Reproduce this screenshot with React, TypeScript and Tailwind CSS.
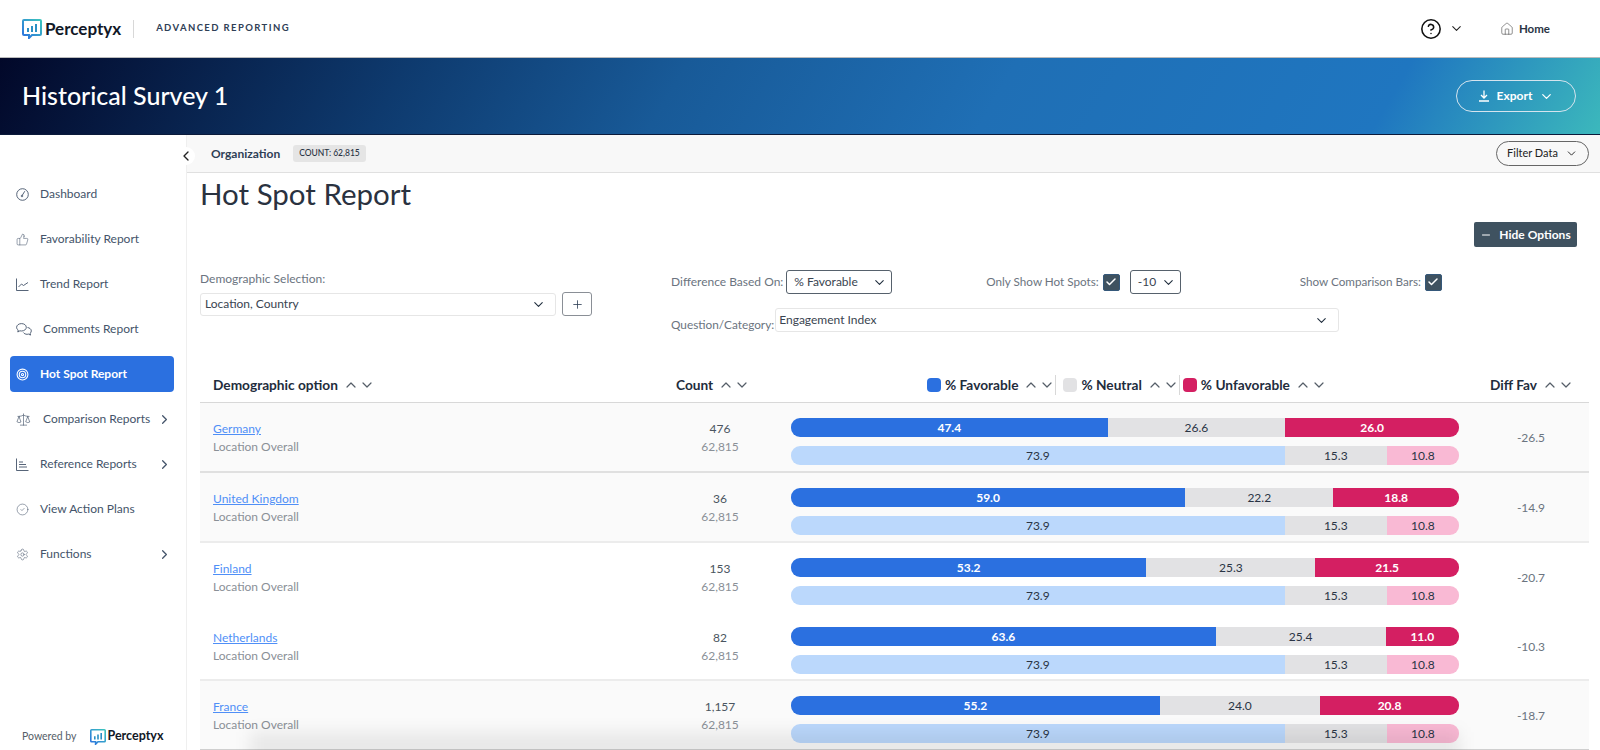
import { Check, ChevronDown, ChevronLeft, ChevronRight, ChevronUp, CircleCheck, CircleHelp, House, Minus, Plus, Scale, Settings, Target, ThumbsUp } from "lucide-react";

const navItems = [
  { label: "Dashboard", icon: "dash" },
  { label: "Favorability Report", icon: "thumb" },
  { label: "Trend Report", icon: "trend" },
  { label: "Comments Report", icon: "comments", wide: true },
  { label: "Hot Spot Report", icon: "target", active: true },
  { label: "Comparison Reports", icon: "scale", wide: true, more: true },
  { label: "Reference Reports", icon: "ref", more: true },
  { label: "View Action Plans", icon: "check" },
  { label: "Functions", icon: "gear", more: true },
];

const rows = [
  { name: "Germany", count: "476", bar: [47.4, 26.6, 26.0], diff: "-26.5", cls: "h-[70px] bg-[#fafafa] border-b-2 border-[#e0e0e0]" },
  { name: "United Kingdom", count: "36", bar: [59.0, 22.2, 18.8], diff: "-14.9", cls: "h-[70px] bg-[#fafafa] border-b-2 border-[#ececec]" },
  { name: "Finland", count: "153", bar: [53.2, 25.3, 21.5], diff: "-20.7", cls: "h-[69px] bg-white" },
  { name: "Netherlands", count: "82", bar: [63.6, 25.4, 11.0], diff: "-10.3", cls: "h-[69px] bg-white border-b-2 border-[#ececec]" },
  { name: "France", count: "1,157", bar: [55.2, 24.0, 20.8], diff: "-18.7", cls: "h-[69px] bg-[#fafafa] border-b border-[#cfcfcf]" },
];

function Logo({ size = 20 }: { size?: number }) {
  return (
    <svg width={size} height={size} viewBox="0 0 20 20" fill="none">
      <defs>
        <linearGradient id="lg" x1="0" y1="1" x2="1" y2="0">
          <stop offset="0" stopColor="#2b70e0" />
          <stop offset="1" stopColor="#3cc4bd" />
        </linearGradient>
      </defs>
      <path d="M2 1h16a1 1 0 0 1 1 1v13a1 1 0 0 1-1 1H10l-3 3v-3H2a1 1 0 0 1-1-1V2a1 1 0 0 1 1-1z" stroke="url(#lg)" strokeWidth="2" />
      <path d="M6 9v4M10 7v6M14 5v8" stroke="#2a8fc4" strokeWidth="2" />
    </svg>
  );
}

function NavIcon({ name }: { name: string }) {
  const cls = "h-[13px] w-[13px] shrink-0";
  if (name === "thumb") return <ThumbsUp className={cls} strokeWidth={1} />;
  if (name === "target") return <Target className={cls} strokeWidth={2} />;
  if (name === "scale") return <Scale className="h-[15px] w-[15px] shrink-0" strokeWidth={1} />;
  if (name === "check") return <CircleCheck className={cls} strokeWidth={1} />;
  if (name === "gear") return <Settings className={cls} strokeWidth={1} />;
  if (name === "dash")
    return (
      <svg className={cls} viewBox="0 0 13 13" fill="none" stroke="currentColor" strokeWidth="0.9">
        <circle cx="6.5" cy="6.5" r="5.8" />
        <path d="M8.8 3.2 6.2 7.4" />
        <circle cx="6" cy="8" r="0.8" />
      </svg>
    );
  if (name === "trend")
    return (
      <svg className={cls} viewBox="0 0 13 13" fill="none" stroke="currentColor" strokeWidth="0.9">
        <path d="M.5 .5v12h12" />
        <path d="M2.5 9 5.5 6 7.5 7.5 12 4.5" />
      </svg>
    );
  if (name === "ref")
    return (
      <svg className={cls} viewBox="0 0 13 13" fill="none" stroke="currentColor" strokeWidth="0.9">
        <path d="M.5 .5v12h12" />
        <path d="M3 4h4M3 6.5h7M3 9h8" />
      </svg>
    );
  return (
    <svg className="h-[13px] w-[16px] shrink-0" viewBox="0 0 16 13" fill="none" stroke="currentColor" strokeWidth="0.9">
      <path d="M5.5 .6c2.700 0 4.800 1.600 4.800 3.700S8.200 8 5.500 8c-.6 0-1.100-.1-1.600-.2L1.800 9l.4-2C1.100 6.300.6 5.400.6 4.300.6 2.200 2.800.6 5.500.6z" />
      <path d="M11.500 4.500c2 .3 3.800 1.600 3.800 3.400 0 .9-.4 1.700-1.100 2.300l.3 1.900-2-1c-.5.1-.9.200-1.400.200-1.600 0-3-.7-3.700-1.800" />
    </svg>
  );
}

function Sort() {
  return (
    <span className="ml-[5px] flex items-center text-[#555e68]">
      <ChevronUp className="h-[16px] w-[16px]" strokeWidth={1.8} />
      <ChevronDown className="h-[16px] w-[16px]" strokeWidth={1.8} />
    </span>
  );
}

function Checkbox() {
  return (
    <span className="flex h-[17px] w-[17px] items-center justify-center rounded-[2px] border border-[#35587a] bg-[#3f5260]">
      <Check className="h-[12px] w-[12px] text-white" strokeWidth={3} />
    </span>
  );
}

function Bar({ values, kind }: { values: number[]; kind: "main" | "compare" }) {
  const main = kind === "main";
  return (
    <div className={`flex h-[19px] w-full overflow-hidden rounded-[9px] text-[12px] text-[#2a3444] ${main ? "leading-[20px]" : "leading-[19px]"}`}>
      <div style={{ width: `${values[0]}%` }} className={main ? "bg-[#2b70e0] text-center font-bold text-white" : "bg-[#bbd8fc] text-center"}>
        {values[0].toFixed(1)}
      </div>
      <div style={{ width: `${values[1]}%` }} className="bg-[#e2e2e4] text-center">
        {values[1].toFixed(1)}
      </div>
      <div style={{ width: `${values[2]}%` }} className={main ? "bg-[#d41f62] text-center font-bold text-white" : "bg-[#f9b9d4] text-center"}>
        {values[2].toFixed(1)}
      </div>
    </div>
  );
}

export default function App() {
  return (
    <div className="flex h-[750px] w-[1600px] flex-col overflow-hidden bg-white font-['Lato',sans-serif] text-[#2a3444]">
      <header className="flex h-[58px] shrink-0 items-center border-b border-[#bcbcbc] pl-[22px] pr-[50px]">
        <Logo />
        <span className="ml-[3px] text-[17px] font-bold text-[#111827]">Perceptyx</span>
        <span className="ml-[12px] h-[18px] w-px bg-[#d8d8d8]" />
        <span className="ml-[22px] text-[9.5px] font-bold tracking-[1.4px] text-[#2f4056]">ADVANCED REPORTING</span>
        <CircleHelp className="ml-auto h-[22px] w-[22px] text-[#111]" strokeWidth={1.7} />
        <ChevronDown className="ml-[7px] h-[15px] w-[15px] text-[#222]" strokeWidth={1.7} />
        <House className="ml-[36px] h-[14px] w-[14px] text-[#444]" strokeWidth={1} />
        <span className="ml-[5px] text-[11.5px] font-bold text-[#2a3444]">Home</span>
      </header>

      <div className="flex h-[77px] shrink-0 items-center justify-between border-b border-[#0b1a3a] bg-[linear-gradient(120deg,#020829_0%,#0e3a6e_25%,#185a98_42%,#1f6fb5_62%,#1f76c0_86%,#3cb8bc_100%)] pl-[22px] pr-[24px]">
        <h1 className="text-[25px] font-medium text-white">Historical Survey 1</h1>
        <button type="button" className="flex h-[32px] w-[120px] items-center justify-center gap-[7px] rounded-full border border-[#d5e4ee] text-[12px] font-bold text-white">
          <svg width="12" height="12" viewBox="0 0 12 12" fill="none" stroke="currentColor" strokeWidth="1.3">
            <path d="M6 0.5v7M3 5l3 3 3-3M1 11h10" />
          </svg>
          Export
          <ChevronDown className="h-[15px] w-[15px]" strokeWidth={2} />
        </button>
      </div>

      <div className="relative flex min-h-0 flex-1">
        <aside className="flex w-[187px] shrink-0 flex-col justify-between border-r border-[#efefef] pl-[10px] pr-[12px] pt-[41px]">
          <nav className="flex flex-col gap-[9px]">
            {navItems.map((item) => (
              <div
                key={item.label}
                className={`flex h-[36px] items-center rounded-[4px] pl-[6px] pr-[2px] text-[12px] ${item.active ? "bg-[#2b70e0] font-bold text-white" : "text-[#44546a]"}`}
              >
                <span className={`flex items-center ${item.wide ? "w-[27px]" : "w-[24px]"}`}>
                  <NavIcon name={item.icon} />
                </span>
                {item.label}
                {item.more && <ChevronRight className="ml-auto h-[15px] w-[15px]" strokeWidth={2} />}
              </div>
            ))}
          </nav>
          <div className="mb-[4px] flex items-center pl-[12px] text-[10.5px] text-[#555e68]">
            <span>Powered by</span>
            <span className="ml-[13px]">
              <Logo size={16} />
            </span>
            <span className="ml-[2px] text-[12.5px] font-bold text-[#111827]">Perceptyx</span>
          </div>
        </aside>

        <button type="button" className="absolute left-[177px] top-[12px] flex h-[18px] w-[18px] items-center justify-center rounded-full bg-white">
          <ChevronLeft className="h-[16px] w-[16px] text-[#222]" strokeWidth={2} />
        </button>

        <main className="min-w-0 flex-1">
          <div className="flex h-[38px] items-center border-b border-[#e0e0e0] bg-[#f8f8f8] pl-[24px] pr-[11px]">
            <span className="text-[12px] font-bold text-[#2f4056]">Organization</span>
            <span className="ml-[13px] rounded-[3px] bg-[#e5e5e5] px-[6px] py-[2px] text-[8.5px] font-medium">COUNT: 62,815</span>
            <button type="button" className="ml-auto flex h-[25px] w-[93px] items-center justify-center gap-[7px] rounded-full border border-[#666] text-[11px] text-[#222]">
              Filter Data
              <ChevronDown className="h-[13px] w-[13px]" strokeWidth={1.7} />
            </button>
          </div>

          <div className="pl-[13px] pr-[11px]">
            <div className="flex h-[38px] items-center pt-[4px]">
              <h2 className="text-[29.5px] font-normal text-[#2a3240]">Hot Spot Report</h2>
            </div>
            <div className="mt-[11px] flex justify-end pr-[12px]">
              <button type="button" className="flex h-[25px] w-[103px] items-center justify-center gap-[7px] rounded-[2px] bg-[#3f5260] text-[12px] font-bold text-white">
                <Minus className="h-[12px] w-[12px]" strokeWidth={2} />
                Hide Options
              </button>
            </div>

            <div className="mt-[23px] flex text-[12px] text-[#6b7480]">
              <div className="w-[471px]">
                <div className="h-[22px]">Demographic Selection:</div>
                <div className="flex items-center gap-[6px]">
                  <div className="flex h-[23px] w-[356px] items-center justify-between rounded-[3px] border border-[#e6e6e6] pl-[4px] pr-[9px] text-[#3a4450]">
                    Location, Country
                    <ChevronDown className="h-[15px] w-[15px] text-[#1f2d3d]" strokeWidth={1.7} />
                  </div>
                  <div className="flex h-[24px] w-[30px] items-center justify-center rounded-[3px] border border-[#8a8f96] text-[#2f4056]">
                    <Plus className="h-[13px] w-[13px]" strokeWidth={1.5} />
                  </div>
                </div>
              </div>

              <div className="flex-1">
                <div className="flex h-[24px] items-center">
                  <span>Difference Based On:</span>
                  <div className="ml-[3px] flex h-[24px] w-[106px] items-center justify-between rounded-[3px] border border-[#56616c] pl-[7px] pr-[4px] text-[#3a4450]">
                    % Favorable
                    <ChevronDown className="h-[15px] w-[15px] text-[#1f2d3d]" strokeWidth={1.7} />
                  </div>
                  <span className="ml-[94px] text-[11.7px]">Only Show Hot Spots:</span>
                  <span className="ml-[4px]">
                    <Checkbox />
                  </span>
                  <div className="ml-[10px] flex h-[24px] w-[51px] items-center justify-between rounded-[3px] border border-[#56616c] pl-[7px] pr-[4px] text-[#3a4450]">
                    -10
                    <ChevronDown className="h-[15px] w-[15px] text-[#1f2d3d]" strokeWidth={1.7} />
                  </div>
                  <span className="ml-[119px] text-[11.7px]">Show Comparison Bars:</span>
                  <span className="ml-[4px]">
                    <Checkbox />
                  </span>
                </div>
                <div className="mt-[14px] flex h-[24px] items-center">
                  <span className="pt-[9px] text-[11.8px]">Question/Category:</span>
                  <div className="ml-[1px] flex h-[24px] w-[564px] items-center justify-between rounded-[3px] border border-[#e6e6e6] pl-[3px] pr-[9px] text-[#3a4450]">
                    Engagement Index
                    <ChevronDown className="h-[15px] w-[15px] text-[#1f2d3d]" strokeWidth={1.7} />
                  </div>
                </div>
              </div>
            </div>

            <div className="mt-[34px] flex h-[37px] items-center border-b border-[#d8d8d8] pt-[2px] text-[13.7px] font-bold text-[#1f2d3d]">
              <div className="flex w-[480px] items-center pl-[13px]">
                Demographic option
                <Sort />
              </div>
              <div className="-ml-[4px] flex w-[84px] items-center justify-start whitespace-nowrap">
                Count
                <Sort />
              </div>
              <div className="ml-[31px] flex w-[668px] items-center pl-[136px]">
                <span className="mr-[4px] h-[14px] w-[14px] rounded-[4px] bg-[#2b70e0]" />
                % Favorable
                <Sort />
                <span className="mr-[7px] h-[20px] w-px bg-[#d8d8d8]" />
                <span className="mr-[4px] h-[14px] w-[14px] rounded-[4px] bg-[#e2e2e4]" />
                % Neutral
                <Sort />
                <span className="mr-[3px] h-[20px] w-px bg-[#d8d8d8]" />
                <span className="mr-[4px] h-[14px] w-[14px] rounded-[4px] bg-[#d41f62]" />
                % Unfavorable
                <Sort />
              </div>
              <div className="ml-[31px] flex items-center whitespace-nowrap">
                Diff Fav
                <Sort />
              </div>
            </div>

            {rows.map((row) => (
              <div key={row.name} className={`flex items-start ${row.cls}`}>
                <div className="flex h-[62px] w-[480px] flex-col justify-center pl-[13px] pt-[7px] text-[12px]">
                  <a href="#" className="self-start text-[#4f8ff7] underline">
                    {row.name}
                  </a>
                  <span className="text-[#8a9097]">Location Overall</span>
                </div>
                <div className="flex h-[62px] w-[80px] flex-col items-center justify-center pt-[7px] text-[12px]">
                  <span className="text-[#4a5560]">{row.count}</span>
                  <span className="text-[#8a9097]">62,815</span>
                </div>
                <div className="ml-[31px] flex w-[668px] flex-col gap-[9px] pt-[15px]">
                  <Bar values={row.bar} kind="main" />
                  <Bar values={[73.9, 15.3, 10.8]} kind="compare" />
                </div>
                <div className="flex h-[69px] flex-1 items-center justify-center pl-[14px] text-[12px] text-[#6b7480]">{row.diff}</div>
              </div>
            ))}
          </div>
        </main>

        <div className="pointer-events-none absolute -bottom-[12px] left-[250px] h-[30px] w-[1210px] bg-black/[0.07] blur-[8px]" />
      </div>
    </div>
  );
}
